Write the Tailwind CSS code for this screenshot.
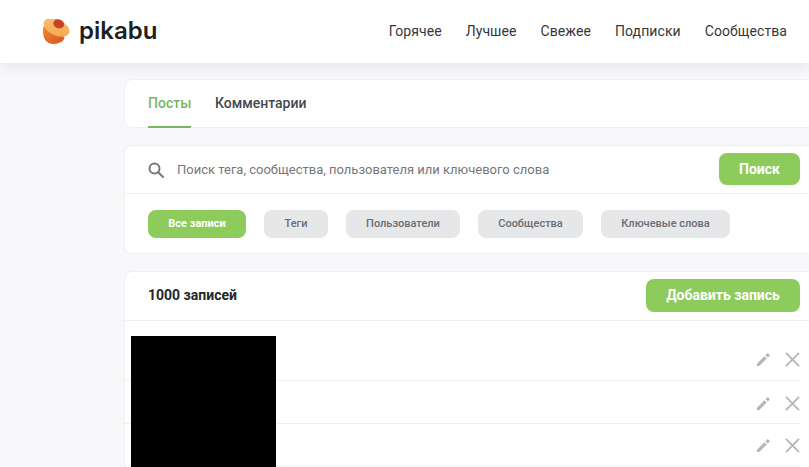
<!DOCTYPE html>
<html lang="ru">
   <head>
      <meta charset="UTF-8" />
      <meta name="viewport" content="width=device-width, initial-scale=1.0" />
      <script src="https://cdn.jsdelivr.net/npm/@tailwindcss/browser@4"></script>
      <title>Pikabu</title>
   </head>

   <body class="bg-[#f8f8fb] text-[#25272b] font-['Roboto',sans-serif] h-[467px] overflow-hidden">
      <!-- Header -->
      <header class="h-[63px] bg-white shadow-[0_2px_16px_rgba(0,0,0,0.09)] flex items-center justify-between pl-[43px] pr-[22px] relative z-10">
         <div class="flex items-center gap-[9px]">
            <svg width="27" height="26" viewBox="0 0 27 26">
               <defs>
                  <linearGradient id="top" x1="0" y1="0" x2="1" y2="1">
                     <stop offset="0" stop-color="#fbc077" />
                     <stop offset="1" stop-color="#f4a548" />
                  </linearGradient>
                  <linearGradient id="bottom" x1="0" y1="0" x2="1" y2="1">
                     <stop offset="0" stop-color="#f08a32" />
                     <stop offset="1" stop-color="#d8531f" />
                  </linearGradient>
               </defs>
               <path d="M0.5 7 C-0.5 13 0 19 3 22 C6 25.5 13 26 18 23 C20 22 21 21 21.5 18 Z" fill="url(#bottom)" />
               <ellipse cx="13.5" cy="8.5" rx="13.8" ry="8" fill="url(#top)" transform="rotate(25 13.5 8.5)" />
               <ellipse cx="15.7" cy="4.8" rx="5.5" ry="4.4" fill="#c9431c" transform="rotate(20 15.7 4.8)" />
            </svg>
            <span class="font-['Inter',sans-serif] text-[24px] font-semibold leading-none text-[#1d1f24] -mt-[1px]">pikabu</span>
         </div>
         <nav class="flex items-center gap-[24px] text-[14px] tracking-[0.08px] text-[#35373b]">
            <a>Горячее</a>
            <a>Лучшее</a>
            <a>Свежее</a>
            <a>Подписки</a>
            <a>Сообщества</a>
         </nav>
      </header>

      <!-- Main Content -->
      <main class="ml-[123.5px] -mr-[20px] pt-[16px] flex flex-col gap-[17px]">
         <!-- Tabs -->
         <div class="h-[49px] bg-white border border-[#f0f0f3] rounded-[8px] flex items-stretch gap-[23.5px] pl-[23.5px]">
            <a class="flex items-center h-[48px] text-[14px] font-medium text-[#7db661] border-b-2 border-[#7db661]">Посты</a>
            <a class="flex items-center h-[46px] text-[14px] font-medium text-[#45474c]">Комментарии</a>
         </div>

         <!-- Search -->
         <div class="h-[109px] bg-white border border-[#f0f0f3] rounded-[8px]">
            <div class="h-[48px] border-b border-[#f0f0f3] flex items-center pl-[23.5px] pr-[28px]">
               <svg width="16" height="16" viewBox="0 0 16 16" fill="none" stroke="#75777b" stroke-width="2" class="mr-[13px]">
                  <circle cx="6.5" cy="6.5" r="5" />
                  <path d="M10.2 10.2 L15 15" stroke-linecap="round" />
               </svg>
               <span class="text-[13px] text-[#75777b]">Поиск тега, сообщества, пользователя или ключевого слова</span>
               <button class="ml-auto w-[81px] h-[32px] bg-[#8dcb5c] text-white text-[14px] font-bold rounded-[8px] -mt-[1px]">Поиск</button>
            </div>
            <div class="flex items-center gap-[18px] pl-[23.5px] pt-[16px] text-[11px] font-medium">
               <button class="w-[98px] h-[28px] bg-[#8dcb5c] text-white rounded-[8px] font-bold">Все записи</button>
               <button class="w-[64px] h-[28px] bg-[#e6e7e9] text-[#6b6d72] rounded-[8px]">Теги</button>
               <button class="w-[114px] h-[28px] bg-[#e6e7e9] text-[#6b6d72] rounded-[8px]">Пользователи</button>
               <button class="w-[105px] h-[28px] bg-[#e6e7e9] text-[#6b6d72] rounded-[8px]">Сообщества</button>
               <button class="w-[129px] h-[28px] bg-[#e6e7e9] text-[#6b6d72] rounded-[8px]">Ключевые слова</button>
            </div>
         </div>

         <!-- Posts -->
         <div class="relative h-[196px] overflow-hidden bg-white border-t border-x border-[#f0f0f3] rounded-t-[8px]">
            <div class="h-[49px] border-b border-[#f0f0f3] flex items-center justify-between pl-[23.5px] pr-[28px]">
               <h2 class="text-[14px] font-bold text-[#25272b] -mt-[1px]">1000 записей</h2>
               <button class="w-[154px] h-[33px] bg-[#8dcb5c] text-white text-[14px] font-bold rounded-[8px] -mt-[1px]">Добавить запись</button>
            </div>

            <div class="mr-[28px] h-[60px] border-b border-[#f0f0f3] flex items-end justify-end gap-[14px] pb-[13px]">
               <svg width="15" height="15" viewBox="0 0 16 16" fill="#b4b5ba"><path d="M1 12.5 V15 H3.5 L11.5 7 L9 4.5 Z M12.6 5.9 L14.6 3.9 Q15 3.5 14.6 3.1 L12.9 1.4 Q12.5 1 12.1 1.4 L10.1 3.4 Z" /></svg>
               <svg width="15" height="15" viewBox="0 0 16 16" stroke="#b4b5ba" stroke-width="1.9" fill="none"><path d="M1 1 L15 15 M15 1 L1 15" /></svg>
            </div>
            <div class="mr-[28px] h-[43px] border-b border-[#f0f0f3] flex items-end justify-end gap-[14px] pb-[12px]">
               <svg width="15" height="15" viewBox="0 0 16 16" fill="#b4b5ba"><path d="M1 12.5 V15 H3.5 L11.5 7 L9 4.5 Z M12.6 5.9 L14.6 3.9 Q15 3.5 14.6 3.1 L12.9 1.4 Q12.5 1 12.1 1.4 L10.1 3.4 Z" /></svg>
               <svg width="15" height="15" viewBox="0 0 16 16" stroke="#b4b5ba" stroke-width="1.9" fill="none"><path d="M1 1 L15 15 M15 1 L1 15" /></svg>
            </div>
            <div class="mr-[28px] h-[43px] border-b border-[#f0f0f3] flex items-end justify-end gap-[14px] pb-[13px]">
               <svg width="15" height="15" viewBox="0 0 16 16" fill="#b4b5ba"><path d="M1 12.5 V15 H3.5 L11.5 7 L9 4.5 Z M12.6 5.9 L14.6 3.9 Q15 3.5 14.6 3.1 L12.9 1.4 Q12.5 1 12.1 1.4 L10.1 3.4 Z" /></svg>
               <svg width="15" height="15" viewBox="0 0 16 16" stroke="#b4b5ba" stroke-width="1.9" fill="none"><path d="M1 1 L15 15 M15 1 L1 15" /></svg>
            </div>

            <!-- Redacted image over the rows -->
            <div class="absolute left-[6.5px] top-[64px] w-[145px] h-[132px] bg-black"></div>
         </div>
      </main>
   </body>
</html>
